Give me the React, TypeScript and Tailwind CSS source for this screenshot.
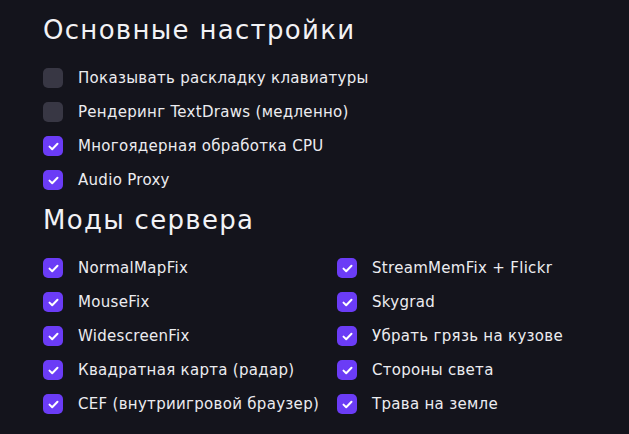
import React from 'react';

type Item = { label: string; checked: boolean };

const basic: Item[] = [
  { label: 'Показывать раскладку клавиатуры', checked: false },
  { label: 'Рендеринг TextDraws (медленно)', checked: false },
  { label: 'Многоядерная обработка CPU', checked: true },
  { label: 'Audio Proxy', checked: true },
];

const mods: Item[] = [
  { label: 'NormalMapFix', checked: true },
  { label: 'StreamMemFix + Flickr', checked: true },
  { label: 'MouseFix', checked: true },
  { label: 'Skygrad', checked: true },
  { label: 'WidescreenFix', checked: true },
  { label: 'Убрать грязь на кузове', checked: true },
  { label: 'Квадратная карта (радар)', checked: true },
  { label: 'Стороны света', checked: true },
  { label: 'CEF (внутриигровой браузер)', checked: true },
  { label: 'Трава на земле', checked: true },
];

const Check = ({ item }: { item: Item }) => (
  <div className="flex items-center h-[34px]">
    <div
      className={`w-5 h-5 rounded-[5px] flex items-center justify-center shrink-0 ${
        item.checked ? 'bg-[#6b3cf6]' : 'bg-[#383744]'
      }`}
    >
      {item.checked && (
        <svg width="11" height="9" viewBox="0 0 11 9" fill="none">
          <path d="M1.5 4.6 L4.2 7.2 L9.5 1.8" stroke="white" strokeWidth="2" strokeLinecap="round" strokeLinejoin="round" />
        </svg>
      )}
    </div>
    <span className="ml-[15px] text-[15px] tracking-[0.3px] text-[#ececf0] whitespace-nowrap">{item.label}</span>
  </div>
);

export default function App() {
  return (
    <div
      className="w-[629px] h-[434px] bg-[#14141c] pl-[43px] pt-[13px] overflow-hidden"
      style={{ fontFamily: '"DejaVu Sans", sans-serif' }}
    >
      <h1 className="text-[26px] leading-[34px] tracking-[1.3px] text-[#f2f2f5] font-normal">Основные настройки</h1>
      <div className="mt-[14px] flex flex-col">
        {basic.map((it) => (
          <Check key={it.label} item={it} />
        ))}
      </div>
      <h2 className="mt-[6px] text-[26px] leading-[34px] tracking-[1.3px] text-[#f2f2f5] font-normal">Моды сервера</h2>
      <div className="mt-[14px] grid grid-cols-[294px_1fr]">
        {mods.map((it) => (
          <Check key={it.label} item={it} />
        ))}
      </div>
    </div>
  );
}
